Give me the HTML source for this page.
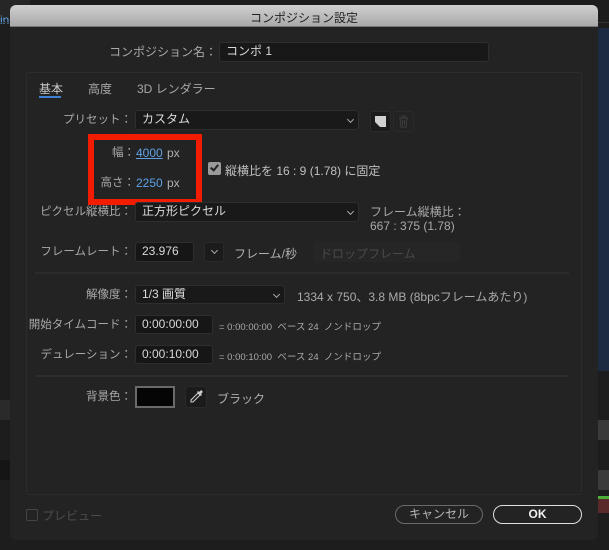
<!DOCTYPE html>
<html><head><meta charset="utf-8"><style>
*{margin:0;padding:0;box-sizing:border-box}
body{width:609px;height:550px;overflow:hidden;background:#1d1d1d;font-family:"Liberation Sans","Noto Sans CJK JP",sans-serif;font-size:11.5px;color:#b4b4b4;position:relative}
.a{position:absolute;white-space:nowrap}
.lbl{position:absolute;white-space:nowrap;text-align:right;color:#a8a8a8;line-height:14px;font-size:11.5px}
.fld{position:absolute;background:#161616;border:1px solid #2e2e2e;border-radius:3px;color:#d8d8d8;padding-left:6px;line-height:17px;font-size:12px}
.dd{position:absolute;background:#191919;border:1px solid #2e2e2e;border-radius:3px;color:#dcdcdc;padding-left:6px;line-height:17px;font-size:12px}
.chev{position:absolute;right:5px;top:6px;width:5px;height:5px;border-right:1px solid #aaa;border-bottom:1px solid #aaa;transform:rotate(45deg)}
.sep{position:absolute;left:35px;width:534px;height:2px;background:#2c2c2c}
.blue{color:#5ea2e6}
</style></head><body>
<div class="a" style="left:0;top:0;width:30px;height:20px;background:#262626"></div>
<div class="a" style="left:0;top:13px;font-size:12px;color:#5ea2e6">in</div>
<div class="a" style="left:0;top:22px;width:609px;height:1px;background:#333"></div>
<div class="a" style="left:598px;top:28px;width:11px;height:343px;background:#1d2b42"></div>
<div class="a" style="left:598px;top:420px;width:11px;height:20px;background:#3a3a3a"></div>
<div class="a" style="left:598px;top:470px;width:11px;height:20px;background:#3a3a3a"></div>
<div class="a" style="left:598px;top:496px;width:11px;height:3px;background:#4caf3a"></div>
<div class="a" style="left:598px;top:499px;width:11px;height:14px;background:#5a2a2a"></div>
<div class="a" style="left:0;top:400px;width:10px;height:20px;background:#2a2a2a"></div>
<div class="a" style="left:0;top:460px;width:10px;height:20px;background:#151515"></div>
<div class="a" style="left:10px;top:5px;width:588px;height:535px;background:#232323;border-radius:6px;overflow:hidden">
  <div class="a" style="left:0;top:0;width:588px;height:22px;background:linear-gradient(#d0d0d0,#a9a9a9);border-bottom:1px solid #777"></div>
  <div class="a" style="left:0;top:4px;width:588px;text-align:center;color:#222;font-size:12px">コンポジション設定</div>
</div>
<div class="lbl" style="left:100px;width:117px;top:45px;font-size:12px">コンポジション名：</div>
<div class="fld" style="left:219px;top:42px;width:270px;height:20px;background:#181818">コンポ 1</div>
<div class="a" style="left:26px;top:72px;width:556px;height:423px;border:1px solid #2c2c2c;border-radius:3px"></div>
<div class="a" style="left:39px;top:80px;color:#c8c8c8;font-size:12px">基本</div>
<div class="a" style="left:39px;top:96px;width:22px;height:2px;background:#3d7fd0"></div>
<div class="a" style="left:88px;top:80px;color:#a8a8a8;font-size:12px">高度</div>
<div class="a" style="left:137px;top:80px;color:#a8a8a8;font-size:12px">3D レンダラー</div>
<div class="lbl" style="left:40px;width:92px;top:113px">プリセット：</div>
<div class="dd" style="left:135px;top:110px;width:224px;height:20px">カスタム<span class="chev"></span></div>
<div class="a" style="left:370px;top:111px;width:21px;height:21px;background:#1b1b1b;border-radius:3px;border:1px solid #2a2a2a">
<svg width="19" height="19" viewBox="0 0 19 19"><path d="M4 4h11v11H9V10H4z" fill="#d0d0d0"/><path d="M4 10h5v5z" fill="#d0d0d0"/></svg></div>
<div class="a" style="left:393px;top:111px;width:21px;height:21px;border:1px solid #2a2a2a;border-radius:3px">
<svg width="19" height="19" viewBox="0 0 19 19"><path d="M5 6h9M8 6V4h3v2M6 6l1 9h5l1-9M8.5 8v5M10.5 8v5" fill="none" stroke="#3e3e3e" stroke-width="1"/></svg></div>
<div class="a" style="left:88px;top:134px;width:114px;height:71px;border:6px solid #f21d00"></div>
<div class="lbl" style="left:95px;width:40px;top:146px">幅：</div>
<div class="a blue" style="left:136px;top:146px;font-size:12px;text-decoration:underline">4000</div>
<div class="a" style="left:167px;top:146px;color:#b0b0b0;font-size:12px">px</div>
<div class="lbl" style="left:95px;width:40px;top:176px">高さ：</div>
<div class="a blue" style="left:136px;top:176px;font-size:12px">2250</div>
<div class="a" style="left:167px;top:176px;color:#b0b0b0;font-size:12px">px</div>
<div class="a" style="left:208px;top:162px;width:13px;height:13px;background:#9a9a9a;border-radius:2px"></div>
<div class="a" style="left:212px;top:163px;width:5px;height:8px;border-right:2px solid #222;border-bottom:2px solid #222;transform:rotate(40deg)"></div>
<div class="a" style="left:225px;top:162px;color:#c0c0c0;font-size:12px">縦横比を 16 : 9 (1.78) に固定</div>
<div class="lbl" style="left:30px;width:102px;top:205px">ピクセル縦横比：</div>
<div class="dd" style="left:135px;top:202px;width:224px;height:20px">正方形ピクセル<span class="chev"></span></div>
<div class="a" style="left:370px;top:203px;color:#a8a8a8;font-size:12px">フレーム縦横比：</div>
<div class="a" style="left:370px;top:219px;color:#a8a8a8;font-size:12px">667 : 375 (1.78)</div>
<div class="lbl" style="left:30px;width:102px;top:245px">フレームレート：</div>
<div class="fld" style="left:135px;top:242px;width:59px;height:20px">23.976</div>
<div class="a" style="left:204px;top:242px;width:20px;height:20px;background:#1b1b1b;border:1px solid #2a2a2a;border-radius:3px"><span class="chev" style="right:6px;top:5px"></span></div>
<div class="a" style="left:234px;top:245px;color:#b0b0b0;font-size:12px">フレーム/秒</div>
<div class="a" style="left:314px;top:242px;width:146px;height:20px;background:#262626;border-radius:3px"></div>
<div class="a" style="left:320px;top:245px;color:#4a4a4a;font-size:12px">ドロップフレーム</div>
<div class="sep" style="top:272px"></div>
<div class="lbl" style="left:40px;width:92px;top:288px">解像度：</div>
<div class="dd" style="left:135px;top:285px;width:150px;height:19px">1/3 画質<span class="chev"></span></div>
<div class="a" style="left:297px;top:288px;color:#aaa;font-size:12px">1334 x 750、3.8 MB (8bpcフレームあたり)</div>
<div class="lbl" style="left:20px;width:112px;top:318px">開始タイムコード：</div>
<div class="fld" style="left:135px;top:315px;width:78px;height:19px;font-size:12px">0:00:00:00</div>
<div class="a" style="left:219px;top:319px;font-size:9.5px;color:#aaa">= 0:00:00:00&nbsp; ベース 24&nbsp; ノンドロップ</div>
<div class="lbl" style="left:20px;width:112px;top:348px">デュレーション：</div>
<div class="fld" style="left:135px;top:345px;width:78px;height:19px;font-size:12px">0:00:10:00</div>
<div class="a" style="left:219px;top:349px;font-size:9.5px;color:#aaa">= 0:00:10:00&nbsp; ベース 24&nbsp; ノンドロップ</div>
<div class="sep" style="top:375px"></div>
<div class="lbl" style="left:40px;width:92px;top:390px">背景色：</div>
<div class="a" style="left:135px;top:386px;width:40px;height:22px;background:#050505;border:2px solid #6a6a6a"></div>
<div class="a" style="left:185px;top:386px;width:22px;height:22px;background:#1b1b1b;border:1px solid #2a2a2a;border-radius:3px">
<svg width="20" height="20" viewBox="0 0 20 20"><path d="M12 6l2 2-7 7H5v-2z" fill="none" stroke="#ccc" stroke-width="1.1"/><path d="M11 5l4 4 1-1-1-1 1.5-1.5a1.5 1.5 0 0 0-2-2L13 5 12 4z" fill="#ccc"/></svg></div>
<div class="a" style="left:217px;top:390px;color:#b0b0b0;font-size:12px">ブラック</div>
<div class="a" style="left:26px;top:509px;width:12px;height:12px;border:1.5px solid #444;border-radius:2px"></div>
<div class="a" style="left:42px;top:507px;color:#4c4c4c;font-size:12px">プレビュー</div>
<div class="a" style="left:395px;top:505px;width:88px;height:19px;border:1.5px solid #6a6a6a;border-radius:10px;text-align:center;line-height:16px;color:#b8b8b8;font-size:12px">キャンセル</div>
<div class="a" style="left:493px;top:505px;width:89px;height:19px;border:1.5px solid #e0e0e0;border-radius:10px;text-align:center;line-height:16px;color:#f0f0f0;font-weight:bold;font-size:12px">OK</div>
</body></html>
